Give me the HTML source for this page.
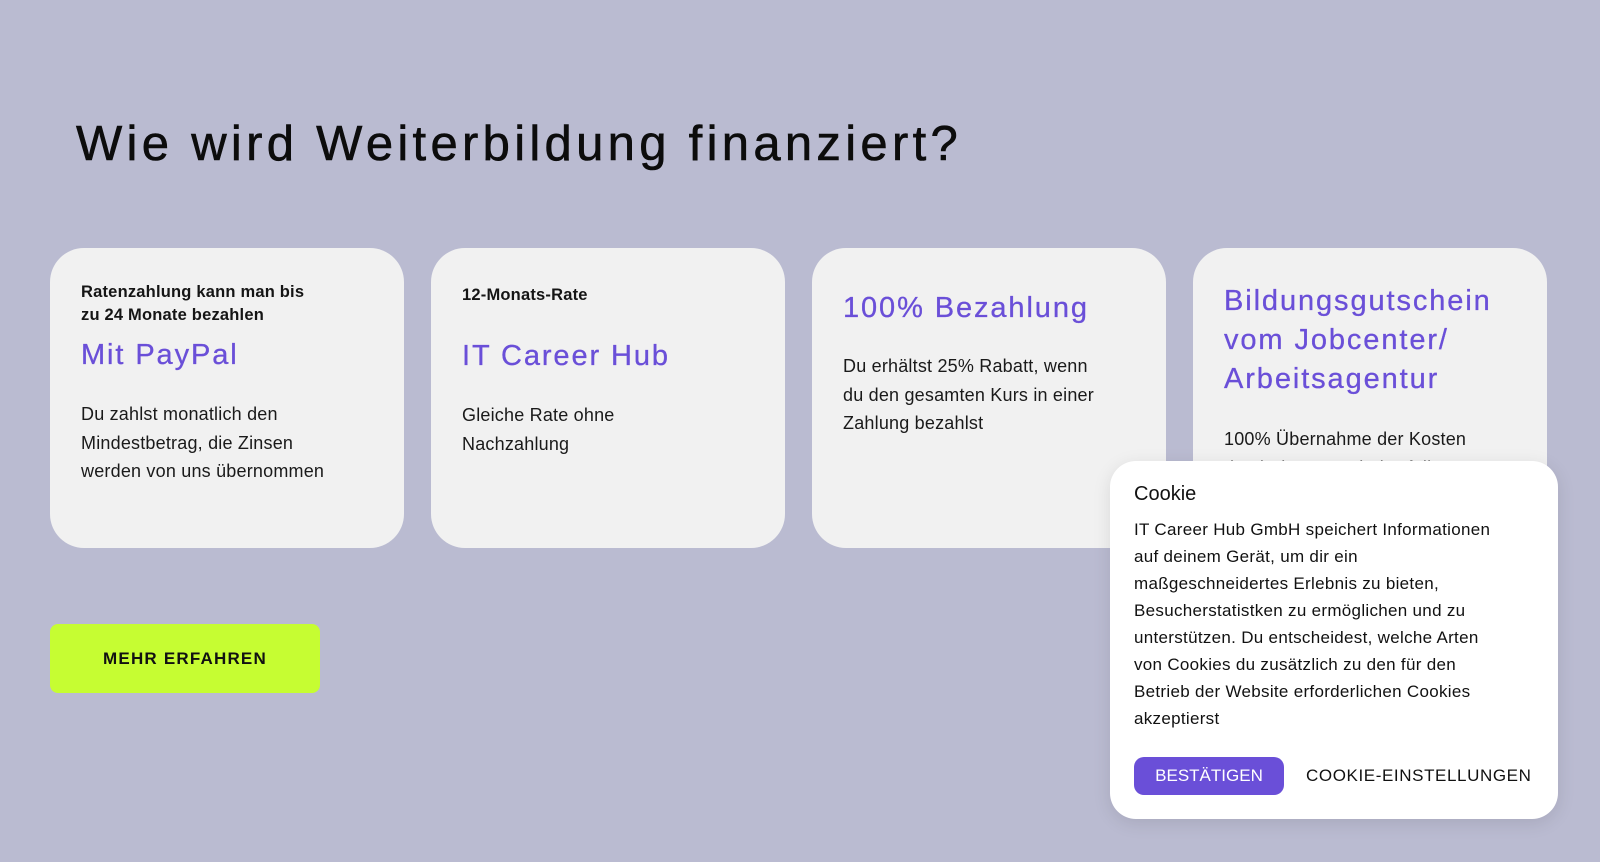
<!DOCTYPE html>
<html><head><meta charset="utf-8"><style>
*{margin:0;padding:0;box-sizing:border-box}
body{width:1600px;height:862px;background:#babbd1;font-family:"Liberation Sans",sans-serif;position:relative;overflow:hidden;color:#111}
h1{position:absolute;left:76px;top:116px;font-size:49px;font-weight:400;letter-spacing:4.3px;color:#0c0c0c;-webkit-text-stroke:0.6px #0c0c0c;white-space:nowrap}
.card{position:absolute;top:248px;width:354px;height:300px;background:#f1f1f1;border-radius:34px}
.lbl{position:absolute;left:31px;font-size:16.5px;line-height:23px;font-weight:bold;color:#151515;letter-spacing:0.2px}
.tt{position:absolute;left:31px;font-size:29px;line-height:39px;color:#6a4fd8;-webkit-text-stroke:0.3px #6a4fd8;letter-spacing:1.9px}
.bd{position:absolute;left:31px;font-size:18px;line-height:28.5px;color:#1a1a1a;width:300px;letter-spacing:0.2px}
.btn{position:absolute;left:50px;top:624px;width:270px;height:69px;background:#c6fd32;border-radius:8px;font-size:17px;letter-spacing:1.2px;font-weight:bold;text-align:center;line-height:69px;color:#111}
.pop{position:absolute;left:1110px;top:461px;width:448px;height:358px;background:#fff;border-radius:26px;box-shadow:0 4px 18px rgba(0,0,0,0.1)}
.pop h3{position:absolute;left:24px;top:22px;font-size:20px;font-weight:400}
.pop p{position:absolute;left:24px;top:55px;width:400px;font-size:17px;line-height:27px;letter-spacing:0.3px}
.b1{position:absolute;left:24px;top:296px;width:150px;height:38px;background:#6a4fd8;border-radius:10px;color:#fff;font-size:17px;text-align:center;line-height:38px}
.b2{position:absolute;left:196px;top:296px;font-size:17px;line-height:38px;color:#111;letter-spacing:0.6px}
</style></head><body>
<h1>Wie wird Weiterbildung finanziert?</h1>
<div class="card" style="left:50px">
<div class="lbl" style="top:33px">Ratenzahlung kann man bis<br>zu 24 Monate bezahlen</div>
<div class="tt" style="top:88px">Mit PayPal</div>
<div class="bd" style="top:152px">Du zahlst monatlich den<br>Mindestbetrag, die Zinsen<br>werden von uns übernommen</div>
</div>
<div class="card" style="left:431px">
<div class="lbl" style="top:36px">12-Monats-Rate</div>
<div class="tt" style="top:89px">IT Career Hub</div>
<div class="bd" style="top:153px">Gleiche Rate ohne<br>Nachzahlung</div>
</div>
<div class="card" style="left:812px">
<div class="tt" style="top:41px">100% Bezahlung</div>
<div class="bd" style="top:104px">Du erhältst 25% Rabatt, wenn<br>du den gesamten Kurs in einer<br>Zahlung bezahlst</div>
</div>
<div class="card" style="left:1193px">
<div class="tt" style="top:34px">Bildungsgutschein<br>vom Jobcenter/<br>Arbeitsagentur</div>
<div class="bd" style="top:177px">100% Übernahme der Kosten<br>durch den Staat bei Erfüllung</div>
</div>
<div class="btn">MEHR ERFAHREN</div>
<div class="pop">
<h3>Cookie</h3>
<p>IT Career Hub GmbH speichert Informationen<br>auf deinem Gerät, um dir ein<br>maßgeschneidertes Erlebnis zu bieten,<br>Besucherstatistken zu ermöglichen und zu<br>unterstützen. Du entscheidest, welche Arten<br>von Cookies du zusätzlich zu den für den<br>Betrieb der Website erforderlichen Cookies<br>akzeptierst</p>
<div class="b1">BESTÄTIGEN</div>
<div class="b2">COOKIE-EINSTELLUNGEN</div>
</div>
</body></html>
